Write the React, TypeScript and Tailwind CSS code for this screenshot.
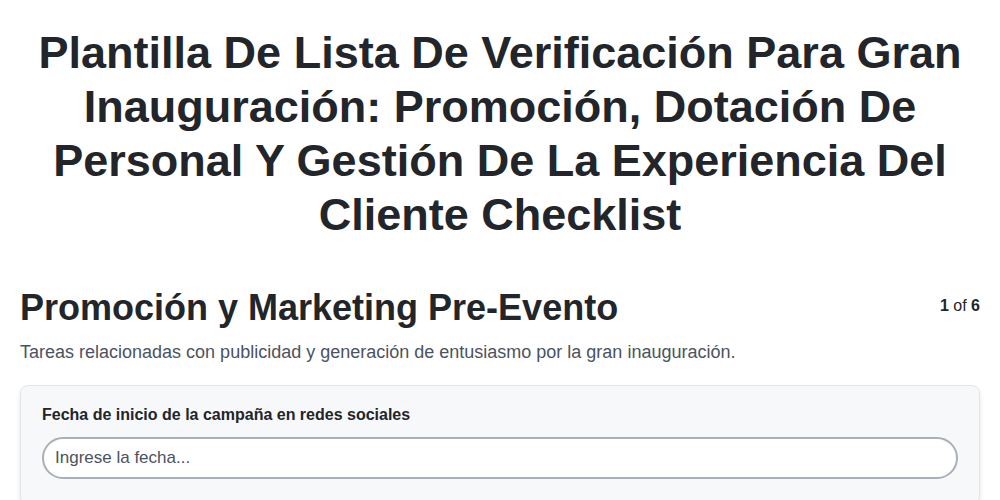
export default function App() {
  return (
    <div className="min-h-screen bg-white px-5 pb-10" style={{ fontFamily: '"Liberation Sans", Arial, sans-serif' }}>
      <h1 className="pt-[26px] text-center text-[45px] font-bold leading-[54px] text-[#222529]">
        Plantilla De Lista De Verificación Para Gran Inauguración: Promoción, Dotación De Personal Y Gestión De La Experiencia Del Cliente Checklist
      </h1>

      <div className="mt-[44px] flex items-start justify-between">
        <h2 className="text-[36px] font-bold leading-[44px] text-[#222529]">Promoción y Marketing Pre-Evento</h2>
        <div className="pt-[8px] text-base text-[#222529]">
          <span className="font-bold">1</span> of <span className="font-bold">6</span>
        </div>
      </div>
      <p className="mt-[8px] text-lg leading-[28px] text-[#4b5360]">
        Tareas relacionadas con publicidad y generación de entusiasmo por la gran inauguración.
      </p>

      <div className="mt-[19px] rounded-lg border border-[#e3e5e8] bg-[#f7f8fa] px-[21px] pt-[17px] pb-6 shadow-md">
        <label className="block text-base font-bold leading-6 text-[#222529]">Fecha de inicio de la campaña en redes sociales</label>
        <input
          type="text"
          placeholder="Ingrese la fecha..."
          className="mt-[10px] h-[42px] w-full rounded-[22px] border-2 border-[#a9afb7] bg-white px-[11px] text-[17px] text-[#222529] placeholder:text-[#4b5360] outline-none"
        />
      </div>
    </div>
  );
}
